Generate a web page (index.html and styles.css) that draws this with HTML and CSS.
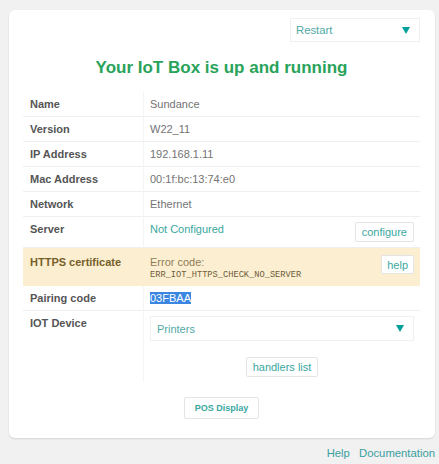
FILE: index.html
```html
<!DOCTYPE html>
<html lang="en">
<head>
    <meta charset="UTF-8">
    <meta name="viewport" content="width=device-width, initial-scale=1.0">
    <title>IoT Box</title>
    <link rel="stylesheet" href="styles.css">
</head>
<body>
    <div class="container">
        <div class="top-bar">
            <div class="select select-restart">
                <span>Restart</span>
                <span class="caret"></span>
            </div>
        </div>
        <h2 class="title">Your IoT Box is up and running</h2>
        <table class="info">
            <tr><th>Name</th><td>Sundance</td></tr>
            <tr><th>Version</th><td>W22_11</td></tr>
            <tr><th>IP Address</th><td>192.168.1.11</td></tr>
            <tr><th>Mac Address</th><td>00:1f:bc:13:74:e0</td></tr>
            <tr><th>Network</th><td>Ethernet</td></tr>
            <tr>
                <th>Server</th>
                <td><span class="btn btn-sm float-right">configure</span><a class="link">Not Configured</a></td>
            </tr>
            <tr class="warning">
                <th>HTTPS certificate</th>
                <td>
                    <span class="btn btn-sm float-right">help</span>
                    Error code:
                    <div class="code">ERR_IOT_HTTPS_CHECK_NO_SERVER</div>
                </td>
            </tr>
            <tr><th>Pairing code</th><td><span class="selected">03FBAA</span></td></tr>
            <tr class="last">
                <th>IOT Device</th>
                <td>
                    <div class="select select-device">
                        <span>Printers</span>
                        <span class="caret"></span>
                    </div>
                    <div class="center handlers">
                        <span class="btn btn-sm">handlers list</span>
                    </div>
                </td>
            </tr>
        </table>
        <div class="center">
            <a class="btn btn-main">POS Display</a>
        </div>
    </div>
    <div class="footer">
        <a>Help</a>
        <a>Documentation</a>
    </div>
</body>
</html>
```

FILE: styles.css
```css
body {
    margin: 0;
    padding: 10px 4px 0 9px;
    font-family: 'Liberation Sans', Arial, sans-serif;
    color: #737373;
    background-color: #f1f1f1;
}

.container {
    background: #fff;
    border-radius: 6px;
    padding: 8px 15px 19px 14px;
    box-shadow: 0 1px 2px rgba(0, 0, 0, 0.12);
}

.top-bar {
    display: flex;
    justify-content: flex-end;
}

.select {
    display: flex;
    align-items: center;
    justify-content: space-between;
    box-sizing: border-box;
    border: 1px solid #f0f0f0;
    background: #fff;
    color: #4fa9a5;
    font-size: 11.3px;
}

.select-restart {
    width: 130px;
    height: 24px;
    padding: 0 9px 0 5px;
}

.select-device {
    height: 25px;
    padding: 0 9px 0 6px;
    font-size: 11px;
}

.caret {
    width: 0;
    height: 0;
    border-left: 4px solid transparent;
    border-right: 4px solid transparent;
    border-top: 7px solid #00a09d;
}

.title {
    margin: 16px 0 14px;
    text-align: center;
    font-size: 17px;
    line-height: 20px;
    color: #29a35a;
}

.info {
    width: 100%;
    border-collapse: collapse;
    table-layout: fixed;
    font-size: 11px;
    line-height: 14px;
}

.info tr {
    border-bottom: 1px solid #efefef;
}

.info tr.last {
    border-bottom: none;
}

.info th {
    width: 107px;
    padding: 5px 6px 5px 7px;
    text-align: left;
    vertical-align: top;
    color: #555;
    border-right: 1px solid #f4f4f4;
}

.info td {
    padding: 5px 6px;
    vertical-align: top;
}

.info tr.warning {
    background: #fcefd1;
    border-bottom: none;
}

.info tr.warning th,
.info tr.warning td {
    padding-top: 7px;
    border-right-color: transparent;
}

.info tr.warning th {
    color: #76602a;
}

.info tr.warning td {
    color: #8f7d5a;
}

.code {
    font-family: 'Liberation Mono', 'Courier New', monospace;
    font-size: 8.7px;
    line-height: 12px;
    color: #6e5c3a;
}

.link {
    color: #3aa7a0;
}

.selected {
    background: #3a86e0;
    color: #fff;
}

.float-right {
    float: right;
}

.btn {
    display: inline-block;
    border: 1px solid #e4e4e4;
    border-radius: 2px;
    background: #fff;
    color: #3aa7a0;
    cursor: pointer;
}

.btn-sm {
    padding: 2px 6px;
    font-size: 11px;
    line-height: 14px;
}

.info tr.warning .btn-sm {
    padding: 2px 5px 1px;
}

.btn-main {
    padding: 5px 10px;
    font-size: 9px;
    line-height: 10px;
    font-weight: bold;
}

.center {
    text-align: center;
}

.handlers {
    margin-top: 16px;
}

.info + .center {
    margin-top: 15px;
}

.footer {
    margin-top: 8px;
    text-align: right;
    font-size: 11.3px;
    line-height: 14px;
}

.footer a {
    margin-left: 6px;
    color: #3a9fa0;
}
```
